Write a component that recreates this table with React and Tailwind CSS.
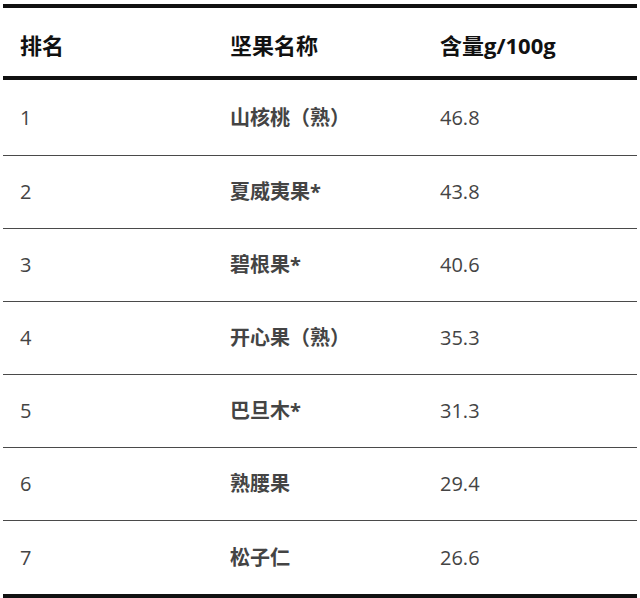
import React from "react";

const rows = [
  ["1", "山核桃（熟）", "46.8"],
  ["2", "夏威夷果*", "43.8"],
  ["3", "碧根果*", "40.6"],
  ["4", "开心果（熟）", "35.3"],
  ["5", "巴旦木*", "31.3"],
  ["6", "熟腰果", "29.4"],
  ["7", "松子仁", "26.6"],
];

export default function App() {
  return (
    <div
      className="w-[640px] h-[598px] bg-white pt-[4px] px-[3px]"
      style={{ fontFamily: '"Open Sans", "Noto Sans CJK SC", sans-serif' }}
    >
      <div className="w-[634px] border-t-4 border-b-4 border-[#111]">
        <div className="grid grid-cols-[210px_210px_214px] h-[72px] items-center border-b-4 border-[#111] pt-[6px] text-[22px] font-bold text-[#111]">
          <div className="pl-[17px]">排名</div>
          <div className="pl-[17px]">坚果名称</div>
          <div className="pl-[17px]">含量g/100g</div>
        </div>
        {rows.map((r, i) => (
          <div
            key={r[0]}
            className={
              "grid grid-cols-[210px_210px_214px] items-center text-[20px] text-[#444] " +
              (i === 0 ? "h-[76px] " : "h-[73px] ") +
              (i < rows.length - 1 ? "border-b border-[#4a4a4a]" : "")
            }
          >
            <div className="pl-[17px]">{r[0]}</div>
            <div className="pl-[17px] font-bold">{r[1]}</div>
            <div className="pl-[17px]">{r[2]}</div>
          </div>
        ))}
      </div>
    </div>
  );
}
